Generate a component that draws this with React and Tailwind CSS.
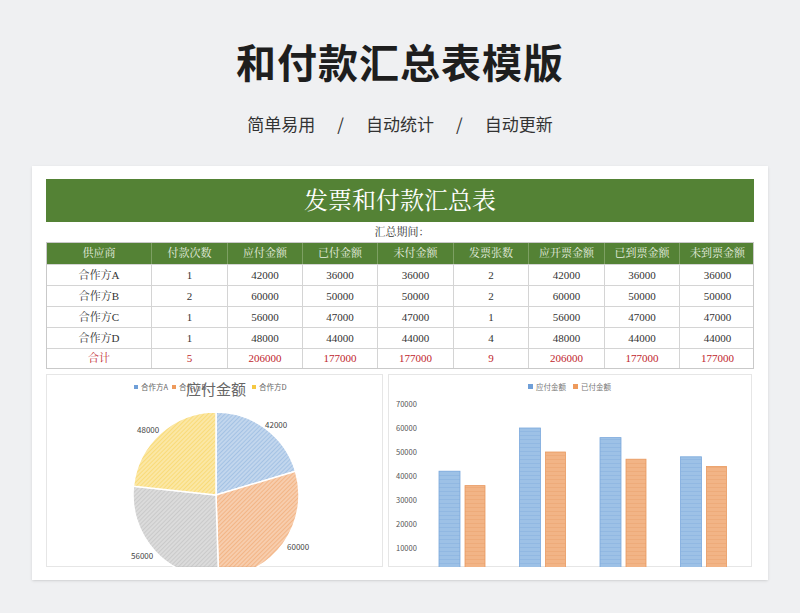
const F = { fontFamily: '"Noto Sans CJK SC", "Noto Sans", sans-serif' };
const S = { fontFamily: '"Liberation Serif", "Noto Serif CJK SC", "Noto Sans CJK SC", serif' };
const cols = ["供应商", "付款次数", "应付金额", "已付金额", "未付金额", "发票张数", "应开票金额", "已到票金额", "未到票金额"];
const rows = [
  ["合作方A", "1", "42000", "36000", "36000", "2", "42000", "36000", "36000"],
  ["合作方B", "2", "60000", "50000", "50000", "2", "60000", "50000", "50000"],
  ["合作方C", "1", "56000", "47000", "47000", "1", "56000", "47000", "47000"],
  ["合作方D", "1", "48000", "44000", "44000", "4", "48000", "44000", "44000"],
];
const total = ["合计", "5", "206000", "177000", "177000", "9", "206000", "177000", "177000"];
const grid = "grid grid-cols-[105px_76px_75px_75px_76px_75px_76px_75px_75px]";

function Pie() {
  const vals = [42000, 60000, 56000, 48000];
  const fills = ["url(#pa)", "url(#pb)", "url(#pc)", "url(#pd)"];
  const sum = vals.reduce((a, b) => a + b, 0);
  const cx = 169, cy = 120, r = 83;
  let a0 = -Math.PI / 2;
  const paths = vals.map((v, i) => {
    const a1 = a0 + (v / sum) * Math.PI * 2;
    const x0 = cx + r * Math.cos(a0), y0 = cy + r * Math.sin(a0);
    const x1 = cx + r * Math.cos(a1), y1 = cy + r * Math.sin(a1);
    const d = `M${cx},${cy} L${x0},${y0} A${r},${r} 0 ${a1 - a0 > Math.PI ? 1 : 0} 1 ${x1},${y1} Z`;
    a0 = a1;
    return <path key={i} d={d} fill={fills[i]} stroke="#fff" strokeWidth="1.5" />;
  });
  const pat = (id, c) => (
    <pattern id={id} width="3" height="3" patternUnits="userSpaceOnUse" patternTransform="rotate(45)">
      <rect width="3" height="3" fill={c} opacity="0.55" />
      <line x1="0" y1="0" x2="0" y2="3" stroke={c} strokeWidth="1.2" />
    </pattern>
  );
  return (
    <svg width="337" height="193" style={F}>
      <defs>
        {pat("pa", "#8fb4de")}
        {pat("pb", "#f0a46a")}
        {pat("pc", "#bdbdbd")}
        {pat("pd", "#f7d25a")}
      </defs>
      {paths}
      <g fontSize="7.5" fill="#666">
        <rect x="87" y="10" width="4" height="4" fill="#6f9fd8" />
        <text x="94" y="15">合作方A</text>
        <rect x="125" y="10" width="4" height="4" fill="#ee9a5c" />
        <text x="132" y="15">合作方B</text>
        <rect x="205" y="10" width="4" height="4" fill="#f5c842" />
        <text x="212" y="15">合作方D</text>
      </g>
      <text x="169" y="20" fontSize="15" fill="#666" textAnchor="middle">应付金额</text>
      <g fontSize="8" fill="#444">
        <text x="218" y="53">42000</text>
        <text x="240" y="175">60000</text>
        <text x="84" y="184">56000</text>
        <text x="90" y="58">48000</text>
      </g>
    </svg>
  );
}

function Bars() {
  const a = [42000, 60000, 56000, 48000], b = [36000, 50000, 47000, 44000];
  const y0 = 197, k = 24 / 10000;
  return (
    <svg width="364" height="193" style={F}>
      <defs>
        <pattern id="hb" width="4" height="4" patternUnits="userSpaceOnUse">
          <rect width="4" height="4" fill="#9dc1e6" />
          <line x1="0" y1="0" x2="4" y2="0" stroke="#86b0de" strokeWidth="1" />
        </pattern>
        <pattern id="ho" width="4" height="4" patternUnits="userSpaceOnUse">
          <rect width="4" height="4" fill="#f2b486" />
          <line x1="0" y1="0" x2="4" y2="0" stroke="#eba26e" strokeWidth="1" />
        </pattern>
      </defs>
      <rect x="139" y="9" width="5" height="5" fill="#6f9fd8" />
      <text x="147" y="15" fontSize="7.5" fill="#777">应付金额</text>
      <rect x="184" y="9" width="5" height="5" fill="#ee9a5c" />
      <text x="192" y="15" fontSize="7.5" fill="#777">已付金额</text>
      {[7, 6, 5, 4, 3, 2, 1].map((n) => (
        <text key={n} x="7" y={y0 - n * 24 + 3} fontSize="7.5" fill="#555">{n}0000</text>
      ))}
      {a.map((v, i) => {
        const x = 50 + i * 80.5;
        return (
          <g key={i}>
            <rect x={x} y={y0 - v * k} width="21" height={v * k} fill="url(#hb)" stroke="#7aa9dc" strokeWidth="0.8" />
            <rect x={x + 26} y={y0 - b[i] * k} width="20" height={b[i] * k} fill="url(#ho)" stroke="#e99a60" strokeWidth="0.8" />
          </g>
        );
      })}
    </svg>
  );
}

export default function App() {
  return (
    <div className="w-[800px] h-[613px] bg-[#eff0f2] flex flex-col items-center overflow-hidden" style={F}>
      <div className="mt-[33px] text-[40px] font-bold leading-[56px] text-[#1e1e1e] tracking-[1px]">和付款汇总表模版</div>
      <div className="mt-[23px] text-[17px] leading-[24px] text-[#333] flex gap-[22px]">
        <span>简单易用</span><span>/</span><span>自动统计</span><span>/</span><span>自动更新</span>
      </div>
      <div className="mt-[30px] w-[736px] h-[414px] bg-white px-[14px] pt-[13px] overflow-hidden shadow-sm">
        <div className="h-[43px] bg-[#548235] text-white text-[24px] flex items-center justify-center" style={S}>发票和付款汇总表</div>
        <div className="h-[20px] text-[11px] text-[#333] flex items-center justify-center pl-[4px]" style={S}>汇总期间：</div>
        <div className="border border-[#c9c9c9] text-[11px]" style={S}>
          <div className={`${grid} h-[21px] bg-[#548235] text-[#e8f0e0]`}>
            {cols.map((c, i) => (
              <div key={i} className="flex items-center justify-center border-r border-[#7da063] last:border-r-0">{c}</div>
            ))}
          </div>
          {rows.map((r, ri) => (
            <div key={ri} className={`${grid} h-[21px] text-[#333] border-t border-[#d4d4d4]`}>
              {r.map((c, i) => (
                <div key={i} className="flex items-center justify-center border-r border-[#d4d4d4] last:border-r-0">{c}</div>
              ))}
            </div>
          ))}
          <div className={`${grid} h-[20px] text-[#c0262d] border-t border-[#d4d4d4]`}>
            {total.map((c, i) => (
              <div key={i} className="flex items-center justify-center border-r border-[#d4d4d4] last:border-r-0">{c}</div>
            ))}
          </div>
        </div>
        <div className="mt-[5px] flex gap-[5px] h-[193px] overflow-hidden">
          <div className="w-[337px] border border-[#e6e6e6]"><Pie /></div>
          <div className="w-[364px] border border-[#e6e6e6]"><Bars /></div>
        </div>
      </div>
    </div>
  );
}
